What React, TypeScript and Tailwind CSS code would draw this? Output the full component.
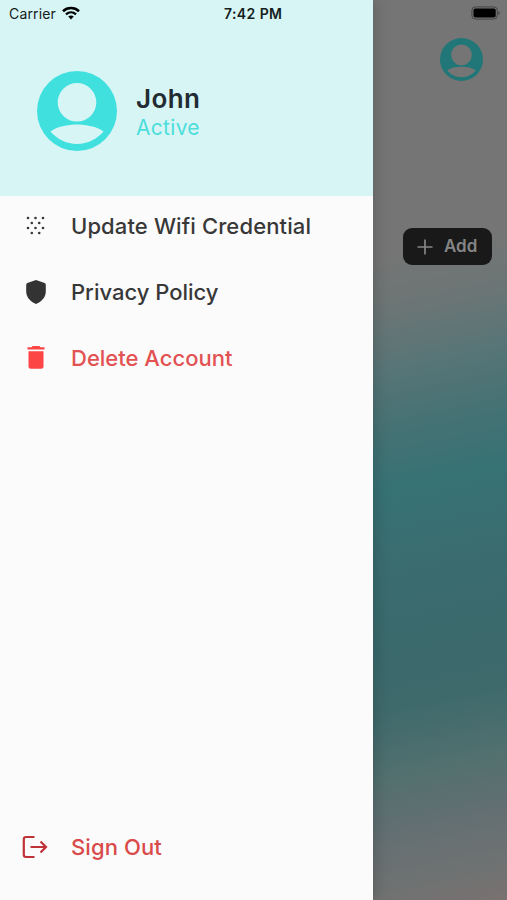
import type { ReactNode } from "react";

const DOTS = [
  [2, 2], [9.5, 2], [17, 2],
  [5.8, 7], [13.2, 7],
  [2, 12], [9.5, 12], [17, 12],
  [5.8, 17], [13.2, 17],
];

function Avatar({ className }: { className: string }) {
  return (
    <svg viewBox="0 0 80 80" className={className}>
      <path
        fill="currentColor"
        fillRule="evenodd"
        d="M40 0a40 40 0 1 0 0 80a40 40 0 0 0 0-80ZM40 12a19.3 19.3 0 1 1 0 38.600a19.300 19.300 0 0 1 0-38.600ZM13.500 60.500C20 55.500 31 53.500 40 53.500S60 55.500 66.500 60.500C60 68 51 73 40 73S20 68 13.500 60.500Z"
      />
    </svg>
  );
}

function WifiIcon() {
  return (
    <svg viewBox="0 0 18 14" className="-mt-0.5 h-[14px] w-[18px]" fill="none" stroke="#000">
      <path d="M1 5.200C5.500 1 12.500 1 17 5.200" strokeWidth="2.600" />
      <path d="M4 8.400C6.900 5.700 11.100 5.700 14 8.400" strokeWidth="2.300" />
      <path d="M9 13.400 6.200 10.600C7.800 9.200 10.200 9.200 11.800 10.600Z" fill="#000" stroke="none" />
    </svg>
  );
}

function BatteryIcon() {
  return (
    <svg viewBox="0 0 30 14" className="-mt-0.5 h-[14px] w-[30px]">
      <rect x="0.900" y="0.900" width="25.400" height="12.200" rx="3.500" fill="none" stroke="#444" strokeWidth="1" />
      <rect x="2.500" y="2.500" width="22.200" height="9" rx="1.800" fill="#000" />
      <path d="M27.500 4.800C29.300 5.500 29.300 8.500 27.500 9.200Z" fill="#444" />
    </svg>
  );
}

function GrainIcon() {
  return (
    <svg viewBox="0 0 19 19" className="-mt-0.5 h-[19px] w-[19px]" fill="#383838">
      {DOTS.map(([x, y]) => (
        <circle key={`${x}-${y}`} cx={x} cy={y} r="1.300" />
      ))}
    </svg>
  );
}

function ShieldIcon() {
  return (
    <svg viewBox="0 0 20 24" className="h-6 w-5" fill="#333">
      <path d="M10 0 18.600 3.100Q19.800 3.600 19.800 4.900V11.500C19.800 17.200 15.600 21.800 10 24C4.400 21.800 0.200 17.200 0.200 11.500V4.900Q0.200 3.600 1.400 3.100Z" />
    </svg>
  );
}

function TrashIcon() {
  return (
    <svg viewBox="0 0 18 23" className="-mt-px h-[23px] w-[18px]" fill="#fc4545">
      <path d="M5.500 0H12.500L13.500 1.200H17.500V3.500H0.500V1.200H4.500Z" />
      <path d="M1.500 5.200H16.500V20.200Q16.500 22.700 14 22.700H4Q1.500 22.700 1.500 20.200Z" />
    </svg>
  );
}

function SignOutIcon() {
  return (
    <svg viewBox="0 0 26 24" className="-mt-px mr-px h-6 w-[26px]" fill="none" stroke="#bf3237" strokeWidth="2.200">
      <path d="M12.500 2H4Q1.800 2 1.800 4.200V19.800Q1.800 22 4 22H12.500" />
      <path d="M8.500 12H24M18.500 6.500 24 12 18.500 17.500" />
    </svg>
  );
}

function MenuItem({ icon, label, className }: { icon: ReactNode; label: string; className: string }) {
  return (
    <li className="flex h-[66px] items-center">
      <span className="flex w-[71px] justify-center">{icon}</span>
      <span className={`whitespace-nowrap text-[22px] font-medium leading-7 ${className}`}>{label}</span>
    </li>
  );
}

export default function App() {
  return (
    <div className="flex h-[900px] w-[507px] overflow-hidden font-['Inter',sans-serif]">
      <aside className="z-10 flex w-[373px] shrink-0 flex-col bg-[#fbfbfb] shadow-[0_0_16px_rgba(0,0,0,0.22)]">
        <header className="h-[196px] bg-[#d7f5f5]">
          <div className="flex h-[27px] items-center pl-[9px] text-[#152020]">
            <span className="w-[53px] text-[14px] tracking-[0.15px]">Carrier</span>
            <WifiIcon />
            <span className="ml-[144px] whitespace-nowrap text-[14px] font-semibold tracking-[0.4px]">7:42 PM</span>
          </div>
          <div className="flex items-center pl-[37px] pt-[44px]">
            <Avatar className="h-20 w-20 text-[#40e0df]" />
            <div className="ml-[19px] pt-[2px]">
              <p className="text-[26px] font-semibold leading-[30px] tracking-[0.4px] text-[#222b32]">John</p>
              <p className="text-[21px] leading-[27px] tracking-[0.3px] text-[#4cdedb]">Active</p>
            </div>
          </div>
        </header>
        <ul className="flex-1 -mt-[3px]">
          <MenuItem icon={<GrainIcon />} label="Update Wifi Credential" className="tracking-[0.12px] text-[#383838]" />
          <MenuItem icon={<ShieldIcon />} label="Privacy Policy" className="text-[#383838]" />
          <MenuItem icon={<TrashIcon />} label="Delete Account" className="text-[#e25252]" />
        </ul>
        <ul className="pb-5">
          <MenuItem icon={<SignOutIcon />} label="Sign Out" className="tracking-[0.1px] text-[#d94a4a]" />
        </ul>
      </aside>
      <main className="flex flex-1 flex-col items-end bg-[linear-gradient(168deg,#757575_0%,#757575_28%,#6b7575_34%,#587577_40%,#477274_46%,#377274_53%,#3a6d70_61%,#3b696c_71%,#3f6a6c_77%,#52706f_84%,#636f72_90%,#6f7272_96%,#797170_100%)]">
        <div className="flex h-[27px] items-center pr-[6px]">
          <BatteryIcon />
        </div>
        <Avatar className="mr-6 mt-[11px] h-[43px] w-[43px] text-[#217778]" />
        <button className="mr-[15px] mt-[147px] flex h-[37px] w-[89px] items-center rounded-[9px] bg-[#191919] pl-[14px] text-[#858585]">
          <svg viewBox="0 0 16 16" className="h-4 w-4" stroke="currentColor" strokeWidth="1.700">
            <path d="M8 0.500V15.500M0.500 8H15.500" />
          </svg>
          <span className="ml-[11px] text-[17px] font-semibold">Add</span>
        </button>
      </main>
    </div>
  );
}
